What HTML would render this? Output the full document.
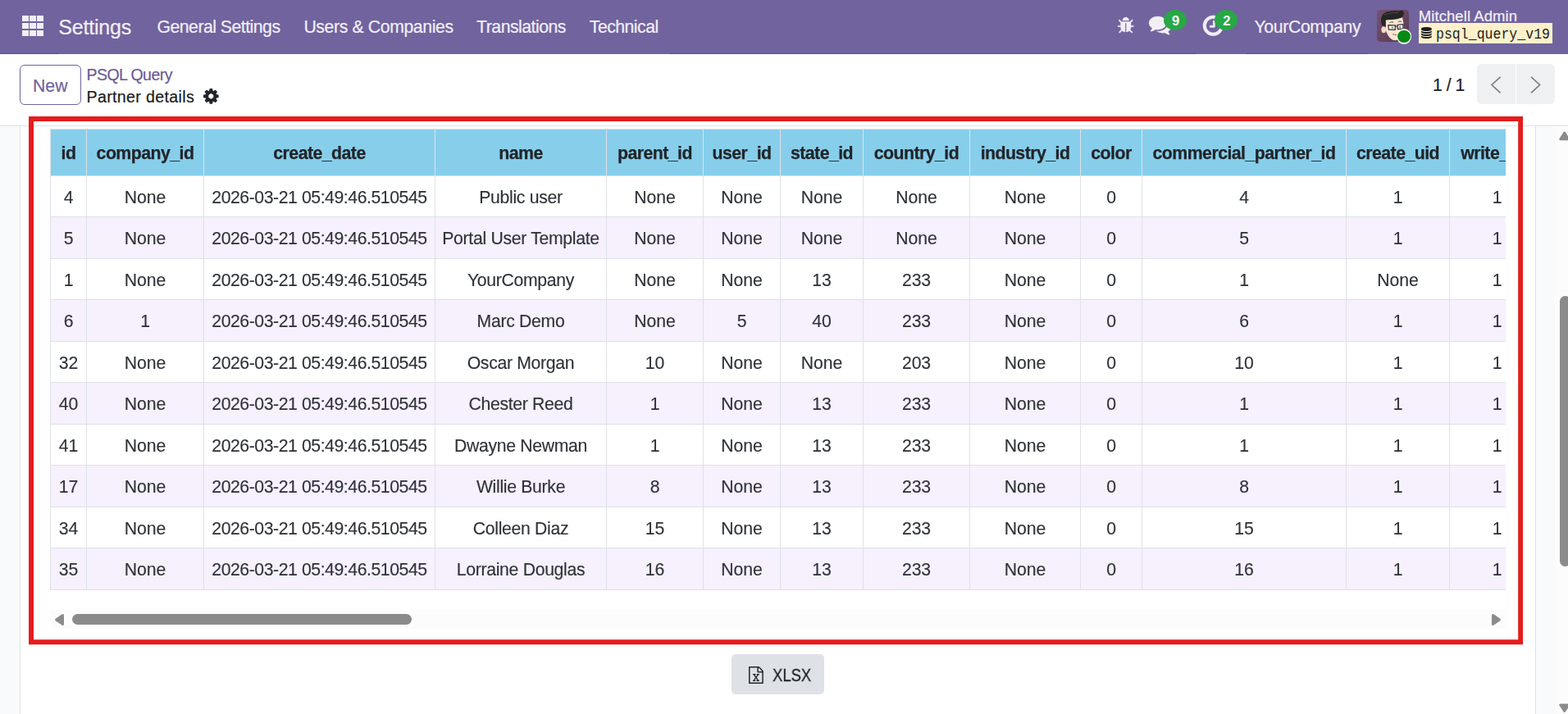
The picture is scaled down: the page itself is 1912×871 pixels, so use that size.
<!DOCTYPE html>
<html lang="en"><head><meta charset="utf-8"><title>Odoo - Partner details</title>
<style>
*{box-sizing:border-box}
html,body{margin:0;padding:0;width:1912px;height:871px;overflow:hidden;background:#fff}
body{position:relative;font-family:"Liberation Sans",sans-serif;color:#212529}
a{text-decoration:none;color:inherit}
button{margin:0;padding:0;border:0;background:none;font:inherit;color:inherit;display:block}
.t{position:absolute;white-space:pre;display:block;-webkit-text-stroke:0.22px currentColor}
.t.mono{font-family:"Liberation Mono",monospace;-webkit-text-stroke:0}
.t.g{will-change:transform;-webkit-text-stroke:0.3px currentColor}
.ic{position:absolute;overflow:visible}
.nav{position:absolute;left:0;top:0;width:1912px;height:66px;background:#71639e;color:#f1eff6}
.nl{position:absolute;top:65px;height:1px;background:#594c81}
.apps{position:absolute;left:27px;top:19px;width:26px;height:26px}
.apps i{position:absolute;width:7.5px;height:7px;background:#f1eff6}
.badge{position:absolute;top:11.7px;width:27.8px;height:25.1px;border-radius:50%;background:#28a745;color:#fff;font-weight:700;font-size:16.5px;line-height:27px;text-align:center;padding-left:1px;overflow:hidden}
.dot{position:absolute;left:1702.6px;top:35.2px;width:18.6px;height:18.6px;border-radius:50%;background:#fff}
.dot:after{content:"";position:absolute;left:1.6px;top:1.6px;width:15.4px;height:15.4px;border-radius:50%;background:#078a12}
.db{position:absolute;left:1730px;top:28px;width:163px;height:25px;background:#fdf1cb}
.cp{position:absolute;left:0;top:66px;width:1912px;height:88px;background:#fff;border-bottom:1px solid #dee2e6}
.btn-new{position:absolute;left:24px;top:13px;width:75px;height:49px;border:1px solid #71639e;border-radius:6px;background:#fff;color:#71639e}
.pg{position:absolute;top:12px;height:49px;width:47px;background:#eff0f2;overflow:hidden}
.pg.prev{left:1801px;border-radius:6px 0 0 6px}
.pg.next{left:1849px;border-radius:0 6px 6px 0}
.content{position:absolute;left:0;top:154px;width:1912px;height:717px;background:#f9fafb}
.sheet{position:absolute;left:24px;top:0;width:1849px;height:717px;background:#fff;border-left:1px solid #dee2e6;border-right:1px solid #dee2e6}
.vsb{position:absolute;left:1897px;top:0;width:15px;height:717px;background:#fcfcfc;overflow:hidden}
.vsb .ic{overflow:hidden}
.vth{position:absolute;left:5px;top:207px;width:13px;height:330px;border-radius:6.5px;background:#8b8b8b}
.tw{position:absolute;width:1775px;height:564px;overflow:hidden;will-change:transform}
table.q{border-collapse:separate;border-spacing:0;table-layout:fixed;width:1823px;border-left:1px solid #dee2e6;border-top:1px solid #dee2e6;font-size:20.5px}
table.q th,table.q td{border-right:1px solid #dee2e6;border-bottom:1px solid #dee2e6;padding:0;text-align:center;vertical-align:middle;white-space:nowrap;overflow:hidden;line-height:24px}
table.q th{background:#87ceeb;color:#212529;font-weight:700;padding-top:1px;font-size:21.3px;letter-spacing:-0.55px;-webkit-text-stroke:0.25px #212529}
table.q td{color:#2f3338;background:#fff;padding-top:2px;font-size:21.2px;letter-spacing:-0.1px;-webkit-text-stroke:0.15px #2f3338}
table.q td:nth-child(3){letter-spacing:-0.42px}
table.q td:nth-child(4){letter-spacing:-0.3px}
table.q tr.alt td{background:#f7f0fd}
.hsb{position:absolute;width:1775px;height:23px;background:#fcfcfc}
.hth{position:absolute;left:27px;top:5px;width:414px;height:13px;border-radius:6.5px;background:#8b8b8b}
.xl{position:absolute;width:113px;height:49px;border-radius:5px;background:#dee1e6}
.redbox{position:absolute;left:0;top:0;pointer-events:none}
</style></head>
<body>
<nav class="nav">
<div class="nl" style="left:0;width:71px"></div><div class="nl" style="left:817px;width:641px"></div><div class="nl" style="left:1520px;width:148px"></div>
<a class="apps" title="Home Menu"><i style="left:0px;top:0px"></i><i style="left:9px;top:0px"></i><i style="left:18px;top:0px"></i><i style="left:0px;top:9px"></i><i style="left:9px;top:9px"></i><i style="left:18px;top:9px"></i><i style="left:0px;top:18px"></i><i style="left:9px;top:18px"></i><i style="left:18px;top:18px"></i></a>
<a class="t brand" style="left:71.20px;top:21.00px;font-size:25.00px;line-height:25.00px;letter-spacing:-0.189px;">Settings</a>
<div class="menu">
<a class="t" style="left:191.50px;top:22.00px;font-size:21.20px;line-height:21.20px;letter-spacing:-0.488px;">General Settings</a>
<a class="t" style="left:370.40px;top:22.00px;font-size:21.20px;line-height:21.20px;letter-spacing:-0.357px;">Users &amp; Companies</a>
<a class="t" style="left:581.10px;top:22.00px;font-size:21.20px;line-height:21.20px;letter-spacing:-0.481px;">Translations</a>
<a class="t" style="left:718.80px;top:22.00px;font-size:21.20px;line-height:21.20px;letter-spacing:-0.498px;">Technical</a>
</div>
<div class="systray">
<svg class="ic" aria-hidden="true" style="left:1363.10px;top:20.90px" width="19.50" height="19.10" viewBox="96 64 1600 1568" preserveAspectRatio="none"><path fill="#f1eff6" stroke="#f1eff6" stroke-width="30" d="M1696 960q0 26-19 45t-45 19h-224q0 171-67 290l208 209q19 19 19 45t-19 45q-18 19-45 19t-45-19l-198-197q-5 5-15 13t-42 28.500-65 36.500-82 29-97 13v-896h-128v896q-51 0-101.500-13.500t-87-33-66-39-43.500-32.500l-15-14-183 207q-20 21-48 21-24 0-43-16-19-18-20.500-44.500t15.500-46.500l202-227q-58-114-58-274h-224q-26 0-45-19t-19-45 19-45 45-19h224v-294l-173-173q-19-19-19-45t19-45 45-19 45 19l173 173h844l173-173q19-19 45-19t45 19 19 45-19 45l-173 173v294h224q26 0 45 19t19 45zm-480-576h-640q0-133 93.500-226.500t226.500-93.500 226.500 93.500 93.500 226.500z"/></svg>
<svg class="ic" aria-hidden="true" style="left:1401.30px;top:19.90px" width="27.30" height="22.20" viewBox="0 256 1792 1408.11" preserveAspectRatio="none"><path fill="#f1eff6" stroke="#f1eff6" stroke-width="20" d="M1408 768q0 139-94 257t-256.500 186.500-353.500 68.500q-86 0-176-16-124 88-278 128-36 9-86 16h-3q-11 0-20.500-8t-11.500-21q-1-3-1-6.500t.5-6.500 2-6l2.500-5 3.500-5.500 4-5 4.500-5 4-4.500q5-6 23-25t26-29.500 22.500-29 25-38.500 20.500-44q-124-72-195-177t-71-224q0-139 94-257t256.500-186.500 353.500-68.500 353.500 68.500 256.500 186.500 94 257zm384 256q0 120-71 224.500t-195 176.500q10 24 20.500 44t25 38.500 22.500 29 26 29.500 23 25q1 1 4 4.500t4.500 5 4 5 3.500 5.500l2.500 5 2 6 .5 6.500-1 6.500q-3 14-13 22t-22 7q-50-7-86-16-154-40-278-128-90 16-176 16-271 0-472-132 58 4 88 4 161 0 309-45t264-129q125-92 192-212t67-254q0-77-23-152 129 71 204 178t75 230z"/></svg>
<span class="badge" style="left:1419.2px">9</span>
<svg class="ic" aria-hidden="true" style="left:1467.30px;top:18.70px" width="24.60" height="24.60" viewBox="128 128 1536 1536" preserveAspectRatio="none"><path fill="#f1eff6" stroke="#f1eff6" stroke-width="40" d="M1024 544v448q0 14-9 23t-23 9h-320q-14 0-23-9t-9-23v-64q0-14 9-23t23-9h224v-352q0-14 9-23t23-9h64q14 0 23 9t9 23zm416 352q0-148-73-273t-198-198-273-73-273 73-198 198-73 273 73 273 198 198 273 73 273-73 198-198 73-273zm224 0q0 209-103 385.500t-279.500 279.500-385.500 103-385.500-103-279.500-279.500-103-385.500 103-385.500 279.500-279.500 385.500-103 385.500 103 279.500 279.500 103 385.500z"/></svg>
<span class="badge" style="left:1481.4px">2</span>
<a class="t" style="left:1529.50px;top:22.00px;font-size:21.20px;line-height:21.20px;letter-spacing:-0.346px;">YourCompany</a>
<svg class="ic avatar" aria-hidden="true" style="left:1679px;top:12px" width="39" height="39" viewBox="0 0 39 39">
<defs><linearGradient id="ag" x1="0" y1="0" x2="1" y2="1"><stop offset="0" stop-color="#765270"/><stop offset="1" stop-color="#583950"/></linearGradient><clipPath id="ac"><rect width="39" height="39" rx="4.5"/></clipPath></defs>
<g clip-path="url(#ac)"><rect width="39" height="39" fill="url(#ag)"/>
<ellipse cx="8.3" cy="24.2" rx="2.9" ry="4" fill="#f6d9c3"/>
<path d="M10.6 11 L31 9 Q33 16 32.6 25 Q31.5 33 25 36.6 Q21.5 38 18 36 Q12.5 32 11 25 Z" fill="#fce6d3"/>
<path d="M24 30 Q28 34 32 27 L32.6 22 Q30 28 24 30 Z" fill="#f3cdb4" opacity=".6"/>
<path d="M5 13.5 Q4.6 5 12 2.6 Q19 0.8 28 1.6 L30.4 0.2 Q31.6 1.4 31.4 2.2 L33 2.6 Q33.4 6 30.4 9.6 Q24 12.4 17 12 Q13 12 10.8 12.4 L10.6 21 Q8.4 19.4 6.6 19.6 Q5.2 17 5 13.5 Z" fill="#262626"/>
<path d="M9 6 Q16 3 26 3.4" fill="none" stroke="#4a4a4a" stroke-width="1"/>
<path d="M13.8 18.6 L22.4 18.8 L22.2 24.4 L14.4 24 Z M25 18.4 L32 17.6 L32 23 L25.4 23.6 Z" fill="#f1efee" stroke="#3a3a3a" stroke-width="1.3" stroke-linejoin="round"/>
<path d="M22.4 20.4 L25 20.2" stroke="#3a3a3a" stroke-width="1.2"/>
<path d="M15.5 15.6 Q17.5 14.4 20 15 M26 14.4 Q28 13.6 30 14.4" fill="none" stroke="#4b3a33" stroke-width="0.9"/>
<circle cx="18.8" cy="21.6" r="0.9" fill="#555"/><circle cx="28" cy="21" r="0.9" fill="#555"/>
<path d="M19 29.4 Q21.5 31.4 24.6 30.4" fill="none" stroke="#8a5a4a" stroke-width="0.9"/>
</g></svg>
<span class="dot"></span>
<span class="t" style="left:1729.80px;top:11.00px;font-size:18.50px;line-height:18.50px;letter-spacing:0.072px;">Mitchell Admin</span>
<span class="db"><svg class="ic" aria-hidden="true" style="left:3.10px;top:5.00px" width="12.80" height="14.10" viewBox="128 0 1536 1792" preserveAspectRatio="none"><path fill="#1a1d21" d="M896 768q237 0 443-43t325-127v170q0 69-103 128t-280 93.500-385 34.500-385-34.500-280-93.500-103-128v-170q119 84 325 127t443 43zm0 768q237 0 443-43t325-127v170q0 69-103 128t-280 93.500-385 34.500-385-34.500-280-93.500-103-128v-170q119 84 325 127t443 43zm0-384q237 0 443-43t325-127v170q0 69-103 128t-280 93.500-385 34.500-385-34.500-280-93.500-103-128v-170q119 84 325 127t443 43zm0-1152q208 0 385 34.500t280 93.500 103 128v128q0 69-103 128t-280 93.500-385 34.500-385-34.500-280-93.500-103-128v-128q0-69 103-128t280-93.500 385-34.500z"/></svg><span class="t mono" style="left:20.60px;top:6.00px;font-size:17.50px;line-height:17.50px;color:#1c1c1c;transform:scaleX(0.9455);transform-origin:0 0;">psql_query_v19</span></span>
</div>
</nav>
<header class="cp">
<button type="button" class="btn-new"><span class="t" style="left:14.90px;top:14.00px;font-size:21.20px;line-height:21.20px;letter-spacing:0.118px;">New</span></button>
<div class="breadcrumb">
<a class="t" style="left:105.50px;top:16.00px;font-size:19.50px;line-height:19.50px;letter-spacing:-0.547px;color:#6a5c97;">PSQL Query</a>
<span class="t" style="left:105.50px;top:43.00px;font-size:19.60px;line-height:19.60px;letter-spacing:0.351px;color:#1a1d21;">Partner details</span>
<svg class="ic" role="img" aria-label="Actions" style="left:247.70px;top:42.20px" width="18.60" height="18.80" viewBox="128 128 1536 1536" preserveAspectRatio="none"><path fill="#212529" d="M1152 896q0-106-75-181t-181-75-181 75-75 181 75 181 181 75 181-75 75-181zm512-109v222q0 12-8 23t-20 13l-185 28q-19 54-39 91 35 50 107 138 10 12 10 25t-9 23q-27 37-99 108t-94 71q-12 0-26-9l-138-108q-44 23-91 38-16 136-29 186-7 28-36 28h-222q-14 0-24.500-8.500t-11.500-21.500l-28-184q-49-16-90-37l-141 107q-10 9-25 9-14 0-25-11-126-114-165-168-7-10-7-23 0-12 8-23 15-21 51-66.500t54-70.500q-27-50-41-99l-183-27q-13-2-21-12.500t-8-23.500v-222q0-12 8-23t19-13l186-28q14-46 39-92-40-57-107-138-10-12-10-24 0-10 9-23 26-36 98.500-107.500t94.500-71.500q13 0 26 10l138 107q44-23 91-38 16-136 29-186 7-28 36-28h222q14 0 24.500 8.500t11.500 21.500l28 184q49 16 90 37l142-107q9-9 24-9 13 0 25 10 129 119 165 170 7 8 7 22 0 12-8 23-15 21-51 66.500t-54 70.500q26 50 41 98l183 28q13 2 21 12.500t8 23.500z"/></svg>
</div>
<div class="pager">
<span class="t" style="left:1747.00px;top:27.00px;font-size:21.20px;line-height:21.20px;color:#1f2329;word-spacing:-1.028px;">1 / 1</span>
<button type="button" class="pg prev" title="Previous"><svg class="ic" aria-hidden="true" style="left:0;top:0" width="47" height="49" viewBox="0 0 47 49"><path d="M28.6 15.8 L18 25.5 L28.6 35.3" fill="none" stroke="#7b7b7b" stroke-width="1.6"/></svg></button>
<button type="button" class="pg next" title="Next"><svg class="ic" aria-hidden="true" style="left:0;top:0" width="47" height="49" viewBox="0 0 47 49"><path d="M18 15.8 L28.6 25.5 L18 35.3" fill="none" stroke="#7b7b7b" stroke-width="1.6"/></svg></button>
</div>
</header>
<main class="content">
<div class="sheet">
<div class="tw" style="left:36px;top:3px"><table class="q"><colgroup><col style="width:44px"><col style="width:143px"><col style="width:282px"><col style="width:209px"><col style="width:118px"><col style="width:94px"><col style="width:101px"><col style="width:130px"><col style="width:135px"><col style="width:75px"><col style="width:249px"><col style="width:126px"><col style="width:116px"></colgroup>
<thead><tr style="height:57px"><th scope="col">id</th><th scope="col">company_id</th><th scope="col">create_date</th><th scope="col">name</th><th scope="col">parent_id</th><th scope="col">user_id</th><th scope="col">state_id</th><th scope="col">country_id</th><th scope="col">industry_id</th><th scope="col">color</th><th scope="col">commercial_partner_id</th><th scope="col">create_uid</th><th scope="col">write_uid</th></tr></thead>
<tbody>
<tr style="height:50px"><td>4</td><td>None</td><td>2026-03-21 05:49:46.510545</td><td>Public user</td><td>None</td><td>None</td><td>None</td><td>None</td><td>None</td><td>0</td><td>4</td><td>1</td><td>1</td></tr>
<tr style="height:51px" class="alt"><td>5</td><td>None</td><td>2026-03-21 05:49:46.510545</td><td>Portal User Template</td><td>None</td><td>None</td><td>None</td><td>None</td><td>None</td><td>0</td><td>5</td><td>1</td><td>1</td></tr>
<tr style="height:50px"><td>1</td><td>None</td><td>2026-03-21 05:49:46.510545</td><td>YourCompany</td><td>None</td><td>None</td><td>13</td><td>233</td><td>None</td><td>0</td><td>1</td><td>None</td><td>1</td></tr>
<tr style="height:51px" class="alt"><td>6</td><td>1</td><td>2026-03-21 05:49:46.510545</td><td>Marc Demo</td><td>None</td><td>5</td><td>40</td><td>233</td><td>None</td><td>0</td><td>6</td><td>1</td><td>1</td></tr>
<tr style="height:50px"><td>32</td><td>None</td><td>2026-03-21 05:49:46.510545</td><td>Oscar Morgan</td><td>10</td><td>None</td><td>None</td><td>203</td><td>None</td><td>0</td><td>10</td><td>1</td><td>1</td></tr>
<tr style="height:51px" class="alt"><td>40</td><td>None</td><td>2026-03-21 05:49:46.510545</td><td>Chester Reed</td><td>1</td><td>None</td><td>13</td><td>233</td><td>None</td><td>0</td><td>1</td><td>1</td><td>1</td></tr>
<tr style="height:50px"><td>41</td><td>None</td><td>2026-03-21 05:49:46.510545</td><td>Dwayne Newman</td><td>1</td><td>None</td><td>13</td><td>233</td><td>None</td><td>0</td><td>1</td><td>1</td><td>1</td></tr>
<tr style="height:51px" class="alt"><td>17</td><td>None</td><td>2026-03-21 05:49:46.510545</td><td>Willie Burke</td><td>8</td><td>None</td><td>13</td><td>233</td><td>None</td><td>0</td><td>8</td><td>1</td><td>1</td></tr>
<tr style="height:50px"><td>34</td><td>None</td><td>2026-03-21 05:49:46.510545</td><td>Colleen Diaz</td><td>15</td><td>None</td><td>13</td><td>233</td><td>None</td><td>0</td><td>15</td><td>1</td><td>1</td></tr>
<tr style="height:51px" class="alt"><td>35</td><td>None</td><td>2026-03-21 05:49:46.510545</td><td>Lorraine Douglas</td><td>16</td><td>None</td><td>13</td><td>233</td><td>None</td><td>0</td><td>16</td><td>1</td><td>1</td></tr>
</tbody></table></div>
<div class="hsb" style="left:36px;top:590px"><svg class="ic" aria-hidden="true" style="left:0;top:0" width="1775" height="23" viewBox="0 0 1775 23"><path d="M7.6 12 L15.5 6.6 L15.5 17.4 Z" fill="#8b8b8b" stroke="#8b8b8b" stroke-width="3" stroke-linejoin="round"/><path d="M1767.4 12 L1759.5 6.6 L1759.5 17.4 Z" fill="#8b8b8b" stroke="#8b8b8b" stroke-width="3" stroke-linejoin="round"/></svg><div class="hth"></div></div>
<button type="button" class="xl" style="left:867px;top:644px"><svg class="ic" aria-hidden="true" style="left:21.00px;top:15.00px" width="17.80" height="21.00" viewBox="128 0 1536 1792" preserveAspectRatio="none"><path fill="#212529" d="M1596 380q28 28 48 76t20 88v1152q0 40-28 68t-68 28h-1344q-40 0-68-28t-28-68v-1600q0-40 28-68t68-28h896q40 0 88 20t76 48zm-444-244v376h376q-10-29-22-41l-313-313q-12-12-41-22zm384 1528v-1024h-416q-40 0-68-28t-28-68v-416h-768v1536h1280zm-979-234v106h281v-106h-75l103-161q5-7 10-16.500t7.500-13.500 3.500-4h2q1 4 5 10 2 4 4.500 7.500t6 8 6.500 8.500l107 161h-76v106h291v-106h-68l-192-273 195-282h67v-107h-279v107h74l-103 159q-4 7-10 16.500t-9 13.500l-2 3h-2q-1-4-5-10-6-11-17-23l-106-159h76v-107h-290v107h68l189 272-194 283h-68z"/></svg><span class="t g" style="left:49.60px;top:15.00px;font-size:21.20px;line-height:21.20px;color:#1f2329;transform:scaleX(0.8707);transform-origin:0 0;">XLSX</span></button>
</div>
<div class="vsb"><svg class="ic" aria-hidden="true" style="left:0;top:0" width="15" height="717" viewBox="0 0 15 717"><path d="M10.7 8.1 L5.8 15.7 L15.6 15.7 Z" fill="#8b8b8b" stroke="#8b8b8b" stroke-width="3" stroke-linejoin="round"/><path d="M10.7 713.5 L5.8 706 L15.6 706 Z" fill="#8b8b8b" stroke="#8b8b8b" stroke-width="3" stroke-linejoin="round"/></svg><div class="vth"></div></div>
</main>
<svg class="redbox" aria-hidden="true" width="1912" height="871" viewBox="0 0 1912 871"><path fill="#e51c1c" fill-rule="evenodd" d="M35 142H1857V786.15H35Z M41 148V780.25H1851.2V148Z"/></svg>
</body></html>
